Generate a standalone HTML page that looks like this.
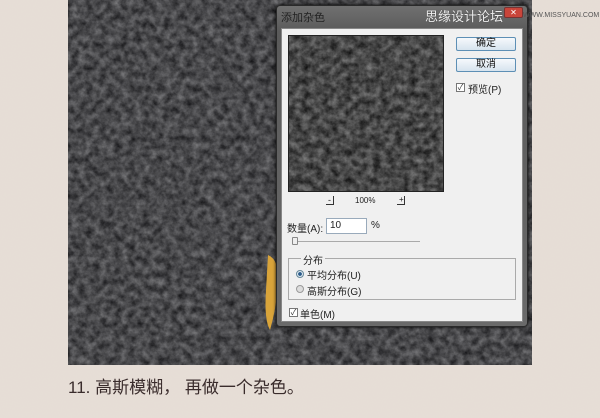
<!DOCTYPE html>
<html><head><meta charset="utf-8"><style>
*{margin:0;padding:0;box-sizing:border-box}
body{width:600px;height:418px;overflow:hidden;background:#e9e1db;font-family:"Liberation Sans","Noto Sans CJK SC",sans-serif;position:relative}
.abs{position:absolute}
.t{font-size:10px;color:#222;font-family:"Liberation Sans","Noto Sans CJK SC",sans-serif;white-space:nowrap}
.btn{position:absolute;width:60px;height:14px;border:1px solid #5d8fb5;border-radius:2px;background:linear-gradient(#f6f9fc,#d6e3ee);font-size:10px;text-align:center;line-height:12px;color:#111}
.cb{position:absolute;width:9px;height:9px;border:1px solid #777;background:#fff;font-size:8px;line-height:7px;text-align:center;color:#333}
</style></head><body>
<svg class="abs" style="left:0;top:0" width="600" height="418">
<filter id="bg" x="0" y="0" width="1" height="1" color-interpolation-filters="sRGB"><feTurbulence type="fractalNoise" baseFrequency="0.8" numOctaves="2" seed="3"/><feColorMatrix values="0 0 0 0 0.91 0 0 0 0 0.88 0 0 0 0 0.85 0 0 0 0.25 0"/></filter>
<filter id="nz" x="0" y="0" width="1" height="1" color-interpolation-filters="sRGB"><feTurbulence type="fractalNoise" baseFrequency="0.14" numOctaves="4" seed="7"/><feColorMatrix values="0.45 0 0 0 0.06 0.45 0 0 0 0.06 0.45 0 0 0 0.07 0 0 0 0 1"/></filter>
<filter id="nz2" x="0" y="0" width="1" height="1" color-interpolation-filters="sRGB"><feTurbulence type="fractalNoise" baseFrequency="0.14" numOctaves="4" seed="11"/><feColorMatrix values="0.5 0 0 0 0.03 0.5 0 0 0 0.03 0.5 0 0 0 0.03 0 0 0 0 1"/></filter>
<rect width="600" height="418" fill="#e6ddd6"/>
<rect width="600" height="418" filter="url(#bg)"/>
<rect x="68" y="0" width="464" height="365" fill="#4a4a4a"/>
<rect x="68" y="0" width="464" height="365" filter="url(#nz)"/>
<path d="M268 255 q12 5 10 30 q-2 25 -8 45 q-6 -10 -4 -40 z" fill="#d9a43a"/>
</svg>
<div class="abs" style="left:276px;top:5px;width:252px;height:322px;background:linear-gradient(#707070,#5a5a5a 8%,#6a6a6a);border:1px solid #2a2a2a;border-radius:4px;box-shadow:0 0 3px #000"></div>
<div class="abs t" style="left:281px;top:9px;color:#222;font-size:11px">添加杂色</div>
<div class="abs" style="left:504px;top:7px;width:19px;height:11px;background:#c9453a;border:1px solid #733;border-radius:2px;color:#fff;font-size:8px;text-align:center;line-height:9px">✕</div>
<div class="abs" style="left:281px;top:28px;width:242px;height:294px;background:#f0f0f0;border:1px solid #888"></div>
<svg class="abs" style="left:288px;top:35px" width="156" height="157"><filter id="nz3" x="0" y="0" width="1" height="1" color-interpolation-filters="sRGB"><feTurbulence type="fractalNoise" baseFrequency="0.14" numOctaves="4" seed="11"/><feColorMatrix values="0.5 0 0 0 0.03 0.5 0 0 0 0.03 0.5 0 0 0 0.03 0 0 0 0 1"/></filter><rect width="156" height="157" fill="#474747"/><rect width="156" height="157" filter="url(#nz3)"/><rect x=".5" y=".5" width="155" height="156" fill="none" stroke="#222"/></svg>
<div class="btn" style="left:456px;top:37px">确定</div>
<div class="btn" style="left:456px;top:58px">取消</div>
<div class="cb" style="left:456px;top:83px">✓</div>
<div class="abs t" style="left:468px;top:81px">预览(P)</div>
<div class="abs" style="left:326px;top:196px;width:8px;height:9px;border-right:1px solid #333;border-bottom:1px solid #333"></div>
<div class="abs t" style="left:328px;top:195px;font-size:9px">-</div>
<div class="abs t" style="left:355px;top:196px;font-size:8px">100%</div>
<div class="abs" style="left:397px;top:196px;width:8px;height:9px;border-right:1px solid #333;border-bottom:1px solid #333"></div>
<div class="abs t" style="left:399px;top:195px;font-size:8px">+</div>
<div class="abs t" style="left:287px;top:220px">数量(A):</div>
<div class="abs" style="left:326px;top:218px;width:41px;height:16px;background:#fff;border:1px solid #9ab"></div>
<div class="abs t" style="left:330px;top:220px">10</div>
<div class="abs t" style="left:371px;top:220px">%</div>
<div class="abs" style="left:292px;top:241px;width:128px;height:1px;background:#aaa"></div>
<div class="abs" style="left:292px;top:237px;width:6px;height:8px;border:1px solid #888;background:#eee;border-radius:1px"></div>
<div class="abs" style="left:288px;top:258px;width:228px;height:42px;border:1px solid #aaa"></div>
<div class="abs t" style="left:301px;top:252px;background:#f0f0f0;padding:0 2px">分布</div>
<div class="abs" style="left:296px;top:270px;width:8px;height:8px;border-radius:50%;border:1px solid #689;background:radial-gradient(#2a5b8a 40%,#dfe8f0 50%)"></div>
<div class="abs t" style="left:307px;top:267px">平均分布(U)</div>
<div class="abs" style="left:296px;top:285px;width:8px;height:8px;border-radius:50%;border:1px solid #999;background:#ddd"></div>
<div class="abs t" style="left:307px;top:283px">高斯分布(G)</div>
<div class="cb" style="left:289px;top:308px">✓</div>
<div class="abs t" style="left:300px;top:306px">单色(M)</div>
<div class="abs" style="left:425px;top:6px;font-size:13px;color:#eee;text-shadow:0 0 1px #333;white-space:nowrap">思缘设计论坛</div>
<div class="abs" style="left:523px;top:12px;font-size:7px;color:#555;white-space:nowrap">WWW.MISSYUAN.COM</div>
<div class="abs" style="left:68px;top:373px;font-size:17px;color:#3a2c2c;white-space:nowrap">11. 高斯模糊， 再做一个杂色。</div>
</body></html>
